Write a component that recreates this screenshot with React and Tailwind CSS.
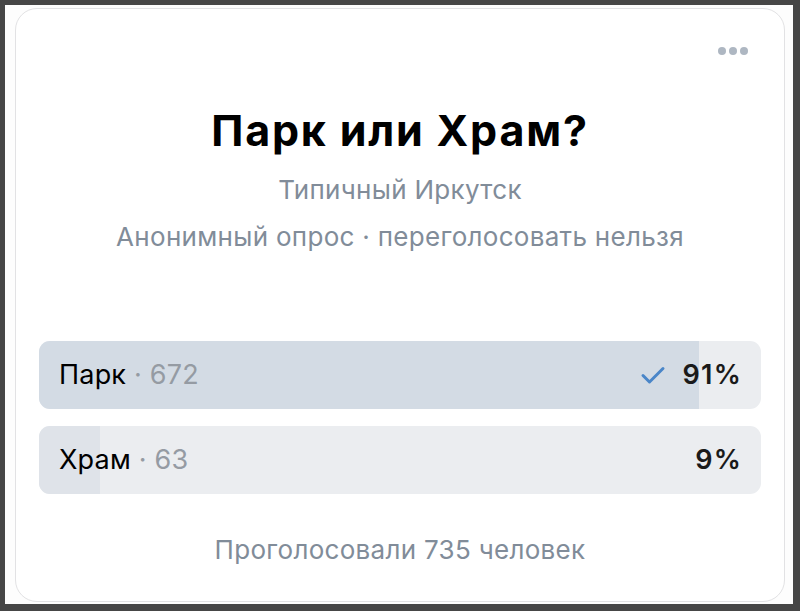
export default function App() {
  const font = { fontFamily: 'Inter, "Noto Sans", sans-serif' };
  return (
    <div className="w-[800px] h-[611px] bg-[#464646] pt-[5px] pl-[5px] pr-[7px] pb-[7px]" style={font}>
      <div className="w-full h-full bg-[#fdfdfd] pt-[3px] pl-[10px] pr-[2px] pb-[2px]">
        <div className="relative w-[770px] h-[594px] rounded-[22px] border-[1.5px] border-[#e2e2e4] bg-white flex flex-col items-center">
          <div className="absolute right-[36px] top-[38px] flex gap-[3px]">
            <span className="w-[8px] h-[8px] rounded-full bg-[#aeb7c2]" />
            <span className="w-[8px] h-[8px] rounded-full bg-[#aeb7c2]" />
            <span className="w-[8px] h-[8px] rounded-full bg-[#aeb7c2]" />
          </div>
          <h1 className="mt-[97px] text-[43px] leading-[48px] font-bold text-black tracking-[1.8px]">Парк или Храм?</h1>
          <div className="mt-[20px] text-[26px] leading-[32px] text-[#818c99] tracking-[0.3px]">Типичный Иркутск</div>
          <div className="mt-[15px] text-[26px] leading-[32px] text-[#818c99] tracking-[0.3px]">Анонимный опрос · переголосовать нельзя</div>
          <div className="mt-[88px] w-[722px] flex flex-col gap-[17px]">
            <div className="relative h-[68px] rounded-[11px] bg-[#ebedf0] overflow-hidden">
              <div className="absolute left-0 top-0 bottom-0 w-[660px] bg-[#d3dbe4]" />
              <div className="relative h-full flex items-center justify-between pl-[20px] pr-[19px]">
                <div className="text-[27px] tracking-[0.2px]">
                  <span className="text-black">Парк</span>
                  <span className="text-[#959ba3]"> · 672</span>
                </div>
                <div className="flex items-center gap-[17px]">
                  <svg width="26" height="20" viewBox="0 0 26 20" fill="none">
                    <path d="M3 10.5 L9.5 17 L23 3.5" stroke="#4a86c8" strokeWidth="3" strokeLinecap="round" strokeLinejoin="round" />
                  </svg>
                  <span className="text-[27px] font-semibold text-[#1a1a1a] tracking-[1.2px]">91%</span>
                </div>
              </div>
            </div>
            <div className="relative h-[68px] rounded-[11px] bg-[#ebedf0] overflow-hidden">
              <div className="absolute left-0 top-0 bottom-0 w-[61px] bg-[#dfe3e9]" />
              <div className="relative h-full flex items-center justify-between pl-[20px] pr-[19px]">
                <div className="text-[27px] tracking-[0.2px]">
                  <span className="text-black">Храм</span>
                  <span className="text-[#959ba3]"> · 63</span>
                </div>
                <span className="text-[27px] font-semibold text-[#1a1a1a] tracking-[1.2px]">9%</span>
              </div>
            </div>
          </div>
          <div className="mt-[40px] text-[26px] leading-[32px] text-[#818c99] tracking-[0.3px]">Проголосовали 735 человек</div>
        </div>
      </div>
    </div>
  );
}
